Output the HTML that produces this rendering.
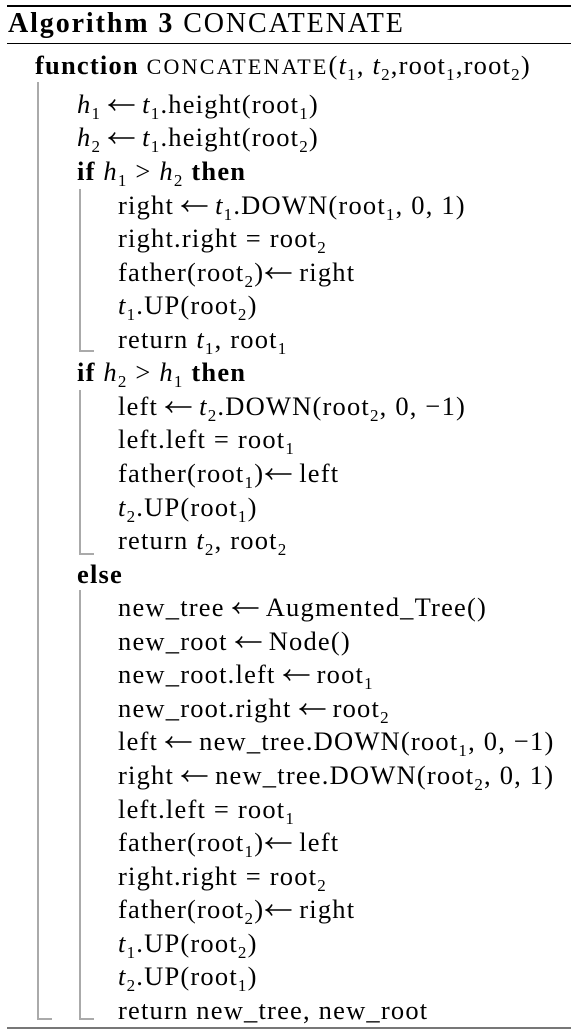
<!DOCTYPE html><html><head><style>
body{margin:0;width:571px;height:1036px;background:#fff;position:relative;overflow:hidden;font-family:"Liberation Serif",serif;font-size:26.5px;letter-spacing:1.2px;color:#000}
.l{position:absolute;white-space:nowrap;line-height:26px;height:26px}
i{font-style:italic}
sub{font-size:17px;vertical-align:-6px;line-height:0}
.sc{font-size:22px;letter-spacing:2.2px}
.a{display:inline-block;width:27px;height:14px;margin:0 7px;vertical-align:1px}
.r{position:absolute;background:#000}
.bar{position:absolute;border-left:2px solid #aaa;border-bottom:2px solid #aaa;width:13px}
</style></head><body>
<svg width="0" height="0" style="position:absolute"><defs><symbol id="ar" viewBox="0 0 27 14"><path d="M1.5 7H26.5M7 1.5Q5 5.5 1.5 7Q5 8.5 7 12.5" fill="none" stroke="#000" stroke-width="1.6"/></symbol></defs></svg>
<div class="r" style="left:7px;top:5px;width:564px;height:2px"></div>
<div class="r" style="left:7px;top:43px;width:564px;height:1px"></div>
<div class="r" style="left:7px;top:1027px;width:564px;height:2px;background:#777"></div>
<div class="l" style="left:8px;top:11px;font-size:28px;letter-spacing:1.9px"><b>Algorithm 3</b> CONCATENATE</div>
<div class="bar" style="left:37px;top:82px;height:936px"></div>
<div class="bar" style="left:79px;top:189px;height:161px"></div>
<div class="bar" style="left:79px;top:390px;height:163px"></div>
<div class="bar" style="left:79px;top:590px;height:428px"></div>
<div class="l" style="left:35px;top:52px"><b>function</b> <span class="sc">CONCATENATE</span>(<i>t</i><sub>1</sub>, <i>t</i><sub>2</sub>,root<sub>1</sub>,root<sub>2</sub>)</div>
<div class="l" style="left:77px;top:91px"><i>h</i><sub>1</sub><svg class="a"><use href="#ar"/></svg><i>t</i><sub>1</sub>.height(root<sub>1</sub>)</div>
<div class="l" style="left:77px;top:124px"><i>h</i><sub>2</sub><svg class="a"><use href="#ar"/></svg><i>t</i><sub>1</sub>.height(root<sub>2</sub>)</div>
<div class="l" style="left:77px;top:158px"><b>if</b> <i>h</i><sub>1</sub> &gt; <i>h</i><sub>2</sub> <b>then</b></div>
<div class="l" style="left:118px;top:192px">right<svg class="a"><use href="#ar"/></svg><i>t</i><sub>1</sub>.DOWN(root<sub>1</sub>, 0, 1)</div>
<div class="l" style="left:118px;top:225px">right.right = root<sub>2</sub></div>
<div class="l" style="left:118px;top:259px">father(root<sub>2</sub>)<svg class="a" style="margin-left:1px"><use href="#ar"/></svg>right</div>
<div class="l" style="left:118px;top:292px"><i>t</i><sub>1</sub>.UP(root<sub>2</sub>)</div>
<div class="l" style="left:118px;top:326px">return <i>t</i><sub>1</sub>, root<sub>1</sub></div>
<div class="l" style="left:77px;top:359px"><b>if</b> <i>h</i><sub>2</sub> &gt; <i>h</i><sub>1</sub> <b>then</b></div>
<div class="l" style="left:118px;top:393px">left<svg class="a"><use href="#ar"/></svg><i>t</i><sub>2</sub>.DOWN(root<sub>2</sub>, 0, −1)</div>
<div class="l" style="left:118px;top:426px">left.left = root<sub>1</sub></div>
<div class="l" style="left:118px;top:460px">father(root<sub>1</sub>)<svg class="a" style="margin-left:1px"><use href="#ar"/></svg>left</div>
<div class="l" style="left:118px;top:494px"><i>t</i><sub>2</sub>.UP(root<sub>1</sub>)</div>
<div class="l" style="left:118px;top:527px">return <i>t</i><sub>2</sub>, root<sub>2</sub></div>
<div class="l" style="left:77px;top:561px"><b>else</b></div>
<div class="l" style="left:118px;top:594px">new_tree<svg class="a"><use href="#ar"/></svg>Augmented_Tree()</div>
<div class="l" style="left:118px;top:628px">new_root<svg class="a"><use href="#ar"/></svg>Node()</div>
<div class="l" style="left:118px;top:661px">new_root.left<svg class="a"><use href="#ar"/></svg>root<sub>1</sub></div>
<div class="l" style="left:118px;top:695px">new_root.right<svg class="a"><use href="#ar"/></svg>root<sub>2</sub></div>
<div class="l" style="left:118px;top:728px">left<svg class="a"><use href="#ar"/></svg>new_tree.DOWN(root<sub>1</sub>, 0, −1)</div>
<div class="l" style="left:118px;top:762px">right<svg class="a"><use href="#ar"/></svg>new_tree.DOWN(root<sub>2</sub>, 0, 1)</div>
<div class="l" style="left:118px;top:796px">left.left = root<sub>1</sub></div>
<div class="l" style="left:118px;top:829px">father(root<sub>1</sub>)<svg class="a" style="margin-left:1px"><use href="#ar"/></svg>left</div>
<div class="l" style="left:118px;top:863px">right.right = root<sub>2</sub></div>
<div class="l" style="left:118px;top:896px">father(root<sub>2</sub>)<svg class="a" style="margin-left:1px"><use href="#ar"/></svg>right</div>
<div class="l" style="left:118px;top:930px"><i>t</i><sub>1</sub>.UP(root<sub>2</sub>)</div>
<div class="l" style="left:118px;top:963px"><i>t</i><sub>2</sub>.UP(root<sub>1</sub>)</div>
<div class="l" style="left:118px;top:997px">return new_tree, new_root</div>
</body></html>
